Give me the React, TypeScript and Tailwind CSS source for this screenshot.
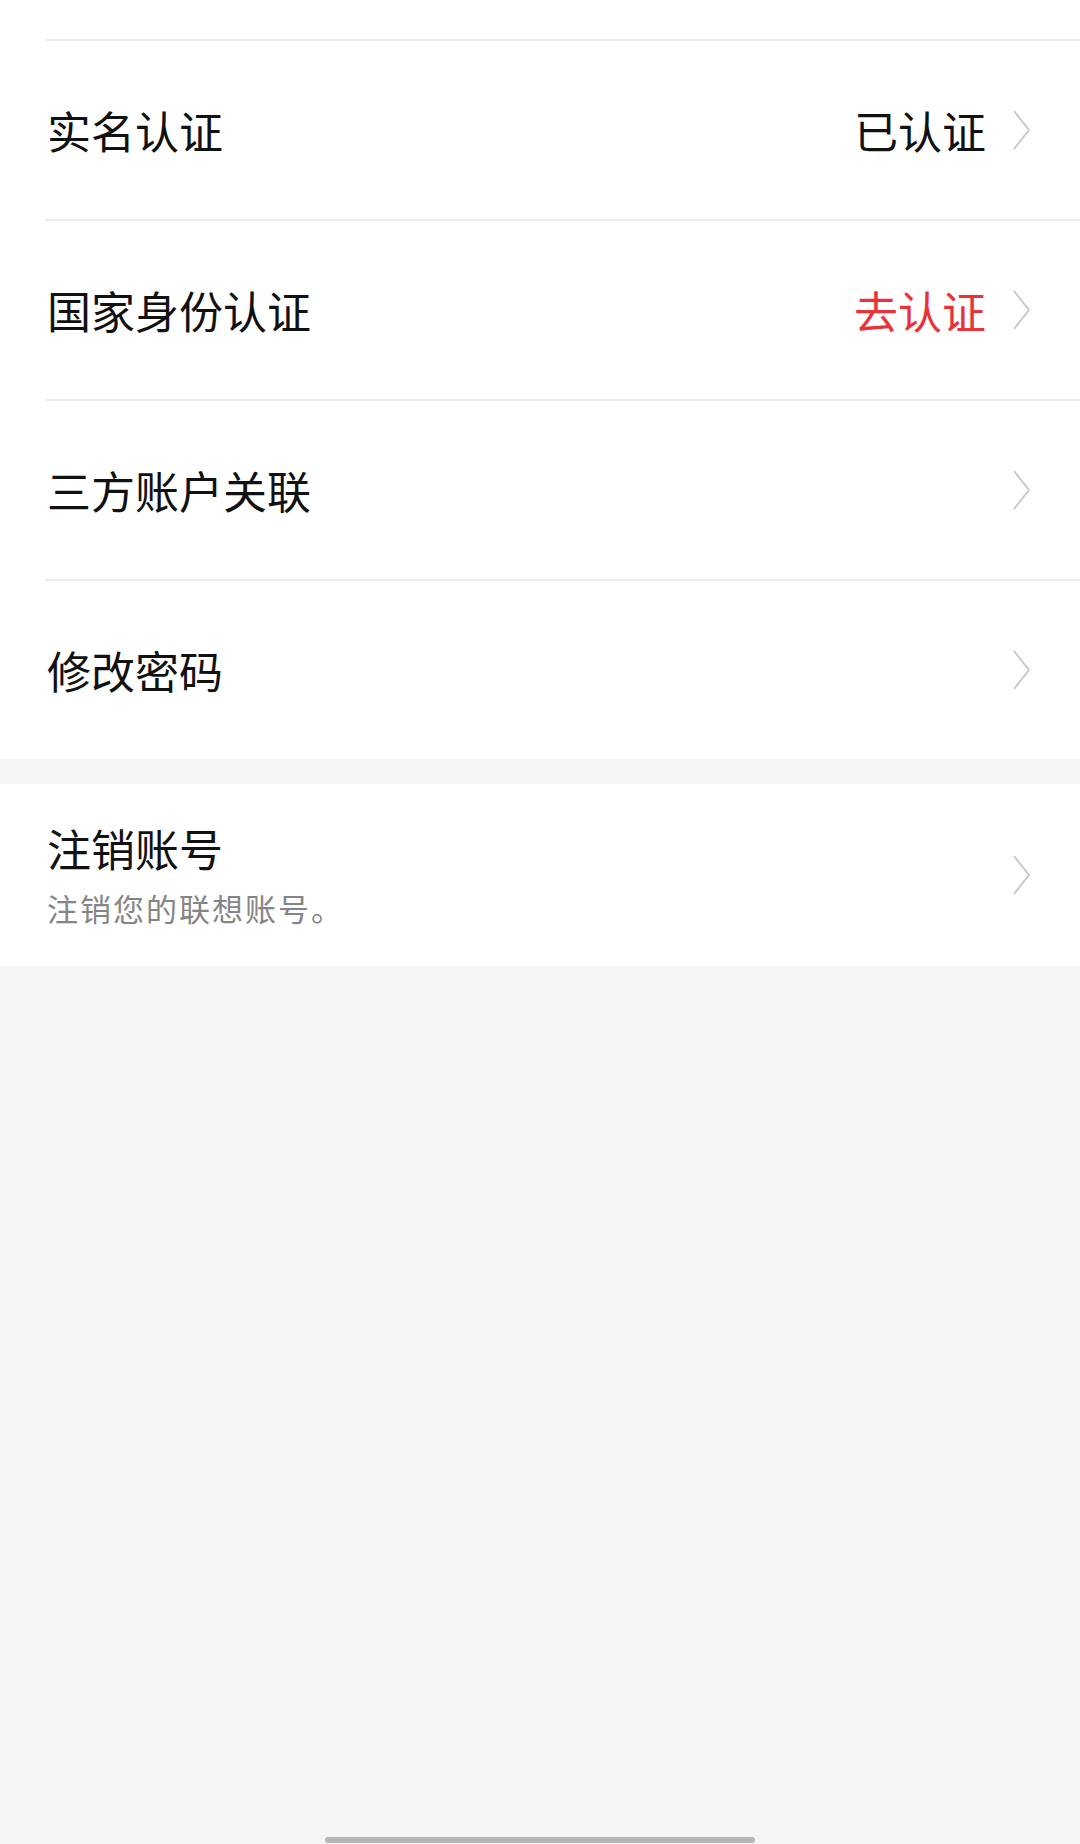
import { ReactNode } from 'react';

const rows: { label: string; value?: string; valueClass?: string }[] = [
  { label: '实名认证', value: '已认证', valueClass: 'text-[#111111]' },
  { label: '国家身份认证', value: '去认证', valueClass: 'text-[#e8333b]' },
  { label: '三方账户关联' },
  { label: '修改密码' },
];

function Chevron() {
  return (
    <svg width="20" height="42" viewBox="0 0 20 42" fill="none" className="shrink-0">
      <polyline points="2,2 17,21 2,40" stroke="#c9c9c9" strokeWidth="2" strokeLinejoin="miter" />
    </svg>
  );
}

function Row({ children }: { children: ReactNode }) {
  return (
    <div className="ml-[45px] h-[180px] border-t-2 border-[#ececec] flex items-center pl-[2px] pr-[48px]">
      {children}
    </div>
  );
}

export default function App() {
  return (
    <div
      className="w-[1080px] h-[1844px] bg-[#f5f5f5] flex flex-col"
      style={{ fontFamily: '"Noto Sans CJK SC", "Noto Sans", sans-serif' }}
    >
      {/* Main settings list */}
      <div className="bg-white pt-[39px]">
        {rows.map((row) => (
          <Row key={row.label}>
            <span className="flex-1 text-[44px] leading-none text-[#111111]">{row.label}</span>
            {row.value && (
              <span className={`text-[44px] leading-none mr-[26px] ${row.valueClass}`}>{row.value}</span>
            )}
            <Chevron />
          </Row>
        ))}
      </div>

      {/* Delete account */}
      <div className="bg-white mt-[25px] h-[182px] flex items-center pl-[47px] pr-[48px]">
        <div className="flex-1 flex flex-col gap-[22px] mb-[2px]">
          <span className="text-[44px] leading-none text-[#111111]">注销账号</span>
          <span className="text-[31px] leading-none tracking-[2px] text-[#858585]">注销您的联想账号。</span>
        </div>
        <Chevron />
      </div>

      {/* Home indicator */}
      <div className="flex-1 flex items-end justify-center">
        <div className="w-[430px] h-[6px] rounded-full bg-[#b5b5b5] mb-[1px]" />
      </div>
    </div>
  );
}
